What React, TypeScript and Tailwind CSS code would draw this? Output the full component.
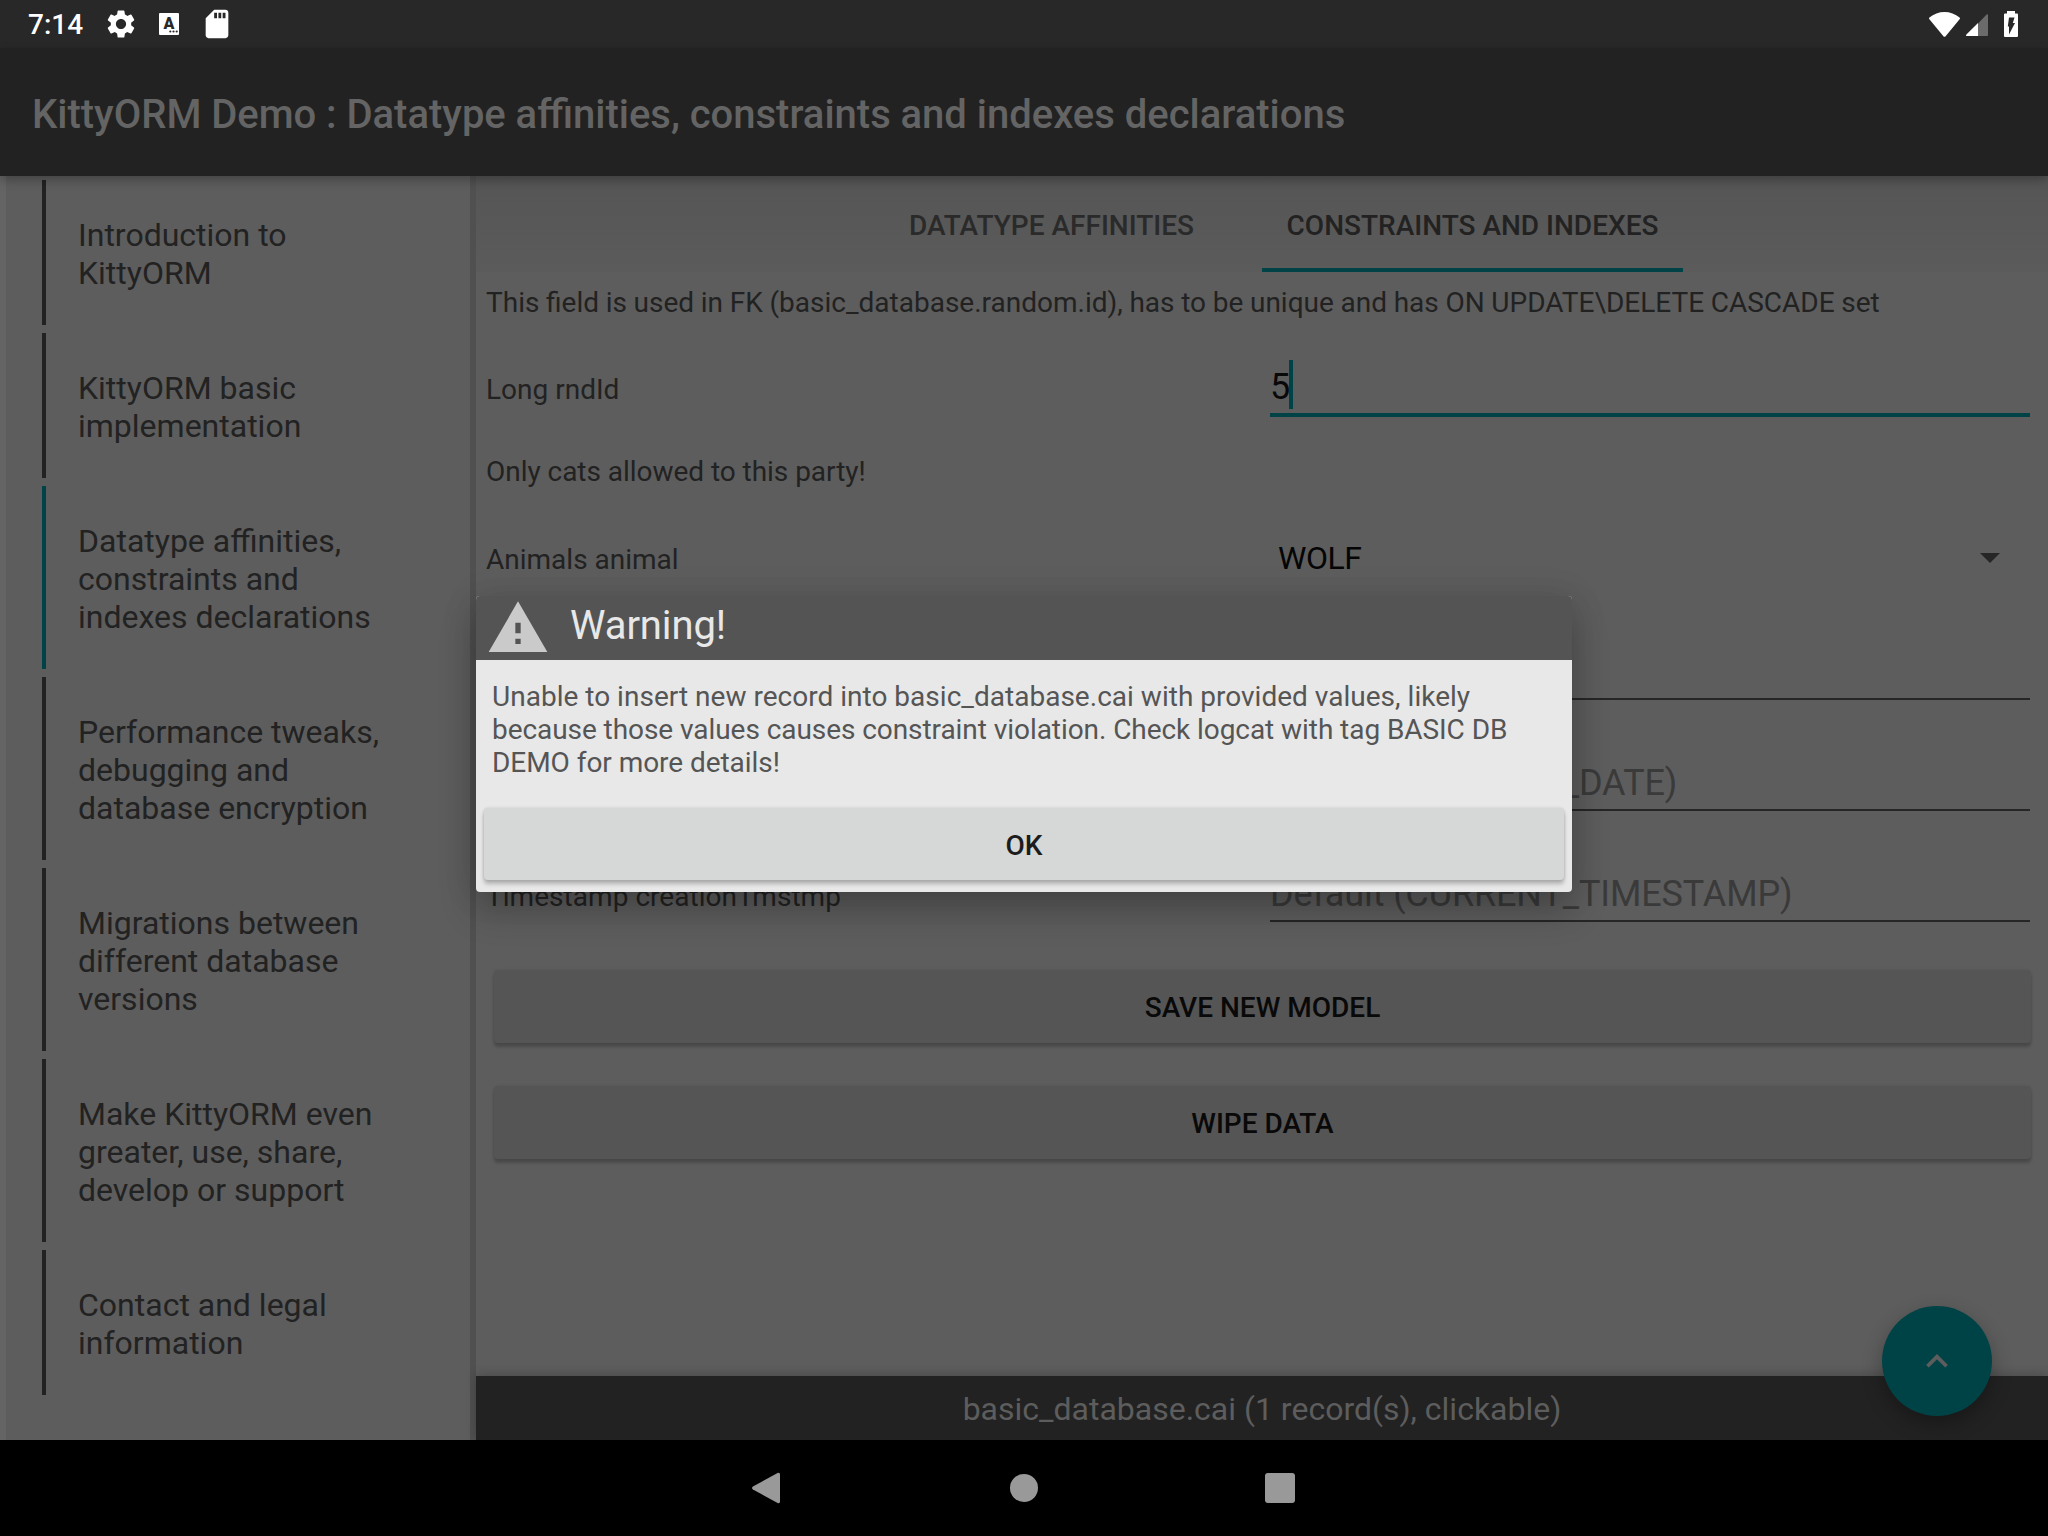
import React from "react";
import { MdSettings, MdSdCard, MdWarning } from "react-icons/md";

const sections = [
  { lines: ["Introduction to", "KittyORM"] },
  { lines: ["KittyORM basic", "implementation"] },
  { lines: ["Datatype affinities,", "constraints and", "indexes declarations"], active: true },
  { lines: ["Performance tweaks,", "debugging and", "database encryption"] },
  { lines: ["Migrations between", "different database", "versions"] },
  { lines: ["Make KittyORM even", "greater, use, share,", "develop or support"] },
  { lines: ["Contact and legal", "information"] },
];

function StatusBar() {
  return (
    <header className="flex h-12 items-center justify-between bg-[#282828] text-white">
      <div className="flex h-12 items-center pl-7">
        <span className="w-[76px] pt-[2px] text-[28px] leading-[50px] font-medium">7:14</span>
        <MdSettings className="size-[34px]" />
        <span className="ml-[21px] flex h-[22px] w-5 flex-col items-center rounded-[1px] bg-white text-[#282828]">
          <span className="mt-[3px] text-[16px] leading-[15px] font-black">A</span>
          <svg className="-mt-px mr-px h-[3px] w-[9px] self-end" viewBox="0 0 9 3">
            <circle cx="1.3" cy="1.5" r="1.1" fill="currentColor" />
            <circle cx="4.5" cy="1.5" r="1.1" fill="currentColor" />
            <circle cx="7.7" cy="1.5" r="1.1" fill="currentColor" />
          </svg>
        </span>
        <MdSdCard className="ml-[21px] size-[34px]" />
      </div>
      <div className="flex h-12 items-center pr-[30px]">
        <svg className="h-[25px] w-[31px]" viewBox="0 0 31 25">
          <path d="M.4 5.6C4.6 2 10 0 15.500 0S26.400 2 30.600 5.600Q31.300 6.400 30.600 7.200L16.600 24.200Q15.500 25.500 14.400 24.200L.4 7.200Q-.3 6.400 .4 5.600Z" fill="#fff" />
        </svg>
        <svg className="ml-[6px] mt-[2px] h-[22px] w-[22px]" viewBox="0 0 22 22">
          <path d="M12 9.500 20.600.5Q22-.4 22 1.200V21Q22 22 21 22H12Z" fill="#6b6b6b" />
          <path d="M12 9V22H1Q-.6 22 .4 20.600Z" fill="#fff" />
        </svg>
        <svg className="ml-4 h-[26px] w-[14px]" viewBox="0 0 14 26">
          <path d="M3 0H11V2.500H13Q14 2.500 14 3.500V25Q14 26 13 26H1Q0 26 0 25V3.500Q0 2.500 1 2.500H3Z" fill="#fff" />
          <path d="M5 6.500H10.500L8.800 12H11L5 23.500V15.500H3.800Z" fill="#282828" />
        </svg>
      </div>
    </header>
  );
}

function Sidebar() {
  return (
    <aside className="flex w-[476px] flex-col gap-2 border-r-[6px] border-l-[6px] border-r-[#505050] border-l-[#646464] bg-[#5d5d5d] pt-1 pl-9">
      {sections.map((s) => (
        <div
          key={s.lines[0]}
          className={
            s.active
              ? "border-l-4 border-[#004347] pt-[35.5px] pb-[33.5px] pl-8 text-[32px] leading-[38px]"
              : "border-l-4 border-[#222] pt-[35.5px] pb-[33.5px] pl-8 text-[32px] leading-[38px]"
          }
        >
          {s.lines.map((l) => (
            <div key={l}>{l}</div>
          ))}
        </div>
      ))}
    </aside>
  );
}

function HintRow({ hint, className }: { hint: string; className: string }) {
  return (
    <div className={className}>
      <div className="flex h-[67px] w-[760px] items-end border-b-2 border-[#262626] pb-[5px] text-4xl leading-[42px] tracking-[-0.12px] text-[#3a3a3a]">
        {hint}
      </div>
    </div>
  );
}

function FormButton({ children }: { children: React.ReactNode }) {
  return (
    <button className="ml-[10px] flex h-[73px] w-[1537px] items-center justify-center rounded-[4px] bg-[#555] pt-[2px] text-[28px] leading-8 font-medium text-[#090909] shadow-[0_4px_3px_rgba(0,0,0,0.2),0_0_3px_rgba(0,0,0,0.1)]">
      {children}
    </button>
  );
}

function Content() {
  return (
    <main className="flex flex-1 flex-col">
      <div className="flex h-24 bg-linear-to-b from-[#555] to-[#5b5b5b] pl-[409px] text-[28px] leading-[100px] font-medium">
        <div className="w-[377px] pl-6 text-[#2a2a2a]">DATATYPE AFFINITIES</div>
        <div className="h-24 w-[421px] border-b-4 border-[#004347] text-center">CONSTRAINTS AND INDEXES</div>
      </div>
      <div className="flex flex-1 flex-col pl-[10px] text-[28px] leading-[34px]">
        <div className="flex h-[60px] items-center pt-[2px] [word-spacing:-0.28px]">
          This field is used in FK (basic_database.random.id), has to be unique and has ON UPDATE\DELETE CASCADE set
        </div>
        <div className="flex h-[85px]">
          <div className="w-[784px] pt-[41px]">Long rndId</div>
          <div className="flex w-[760px] border-b-4 border-[#004347] pt-7 text-4xl leading-[54px] text-[#090909]">
            5<span className="-ml-px h-[49px] w-1 bg-[#004347]" />
          </div>
        </div>
        <div className="mt-[29px] flex h-[50px] items-center pt-[2px] tracking-[-0.04px]">Only cats allowed to this party!</div>
        <div className="flex h-[126px] items-center">
          <div className="w-[792px] pt-[2px]">Animals animal</div>
          <div className="flex w-[722px] items-center justify-between pb-[3px] text-[32px] leading-[38px] tracking-[-0.5px] text-[#050505]">
            WOLF
            <svg className="mt-px h-[10px] w-5" viewBox="0 0 20 10">
              <path d="M0 0H20L10 10Z" fill="#262626" />
            </svg>
          </div>
        </div>
        <HintRow hint="" className="flex h-[78px] items-end pl-[784px]" />
        <HintRow hint="Default (CURRENT_DATE)" className="flex h-[111px] items-end pl-[784px]" />
        <div className="flex h-[111px] items-end">
          <div className="w-[784px] pb-2 tracking-[0.04px]">Timestamp creationTmstmp</div>
          <HintRow hint="Default (CURRENT_TIMESTAMP)" className="flex" />
        </div>
        <div className="mt-12 -ml-[2px] flex flex-col gap-[43px]">
          <FormButton>SAVE NEW MODEL</FormButton>
          <FormButton>WIPE DATA</FormButton>
        </div>
      </div>
      <footer className="h-16 bg-[#222] text-center text-[32px] leading-[66px] text-[#5d5d5d] shadow-[0_-2px_10px_rgba(0,0,0,0.2)]">
        basic_database.cai (1 record(s), clickable)
      </footer>
    </main>
  );
}

function WarningDialog() {
  return (
    <section className="absolute top-[596px] left-[476px] h-[296px] w-[1096px] rounded-[4px] bg-[#e8e8e8] shadow-[0_18px_36px_rgba(0,0,0,0.24),0_2px_36px_rgba(0,0,0,0.1)]">
      <div className="flex h-16 items-center rounded-t-[4px] bg-[#545454] pl-[10px]">
        <MdWarning className="size-16 text-[#cacaca]" />
        <h2 className="ml-5 pb-1 text-[40px] leading-[48px] tracking-[-0.1px] text-[#e8e8e8]">Warning!</h2>
      </div>
      <div className="px-4 pt-5 text-[28px] leading-[33px] text-[#555]">
        <p className="tracking-[0.015px]">Unable to insert new record into basic_database.cai with provided values, likely</p>
        <p className="tracking-[-0.065px]">because those values causes constraint violation. Check logcat with tag BASIC DB</p>
        <p className="tracking-[-0.05px]">DEMO for more details!</p>
      </div>
      <button className="mt-[29px] ml-2 flex h-[72px] w-[1080px] items-center justify-center rounded-[4px] bg-[#d6d8d7] pt-1 text-[28px] leading-8 font-medium text-[#1c1c1c] shadow-[0_4px_4px_rgba(0,0,0,0.24),0_0_3px_rgba(0,0,0,0.14)]">
        OK
      </button>
    </section>
  );
}

export default function App() {
  return (
    <div className="relative flex h-[1536px] w-[2048px] flex-col overflow-hidden bg-[#5d5d5d] font-['Roboto',sans-serif] text-[#222]">
      <StatusBar />
      <div className="relative z-10 h-32 bg-[#222] pl-8 text-[40px] leading-[134px] font-medium text-[#646464] shadow-[0_4px_10px_rgba(0,0,0,0.28)] [word-spacing:-0.15px]">
        KittyORM Demo : Datatype affinities, constraints and indexes declarations
      </div>
      <div className="flex h-[1264px]">
        <Sidebar />
        <Content />
      </div>
      <button className="absolute top-[1306px] left-[1882px] flex size-[110px] items-center justify-center rounded-full bg-[#004347] pb-px shadow-[0_8px_20px_rgba(0,0,0,0.3)]">
        <svg className="h-[14px] w-[22px]" viewBox="0 0 23 14">
          <path d="M1.500 12.500 11.500 2.500 21.500 12.500" fill="none" stroke="#5d5d5d" strokeWidth="4" />
        </svg>
      </button>
      <nav className="relative flex h-24 items-center bg-black pl-[752px]">
        <svg className="h-8 w-[28px]" viewBox="0 0 29 32">
          <path d="M1 14.500 26.500.5Q29-.5 29 2V30Q29 32.500 26.500 31.500L1 17.500Q-1 16 1 14.500Z" fill="#999" />
        </svg>
        <span className="ml-[230px] size-7 rounded-full bg-[#999]" />
        <span className="ml-[227px] size-[30px] rounded-[3px] bg-[#999]" />
      </nav>
      <WarningDialog />
    </div>
  );
}
